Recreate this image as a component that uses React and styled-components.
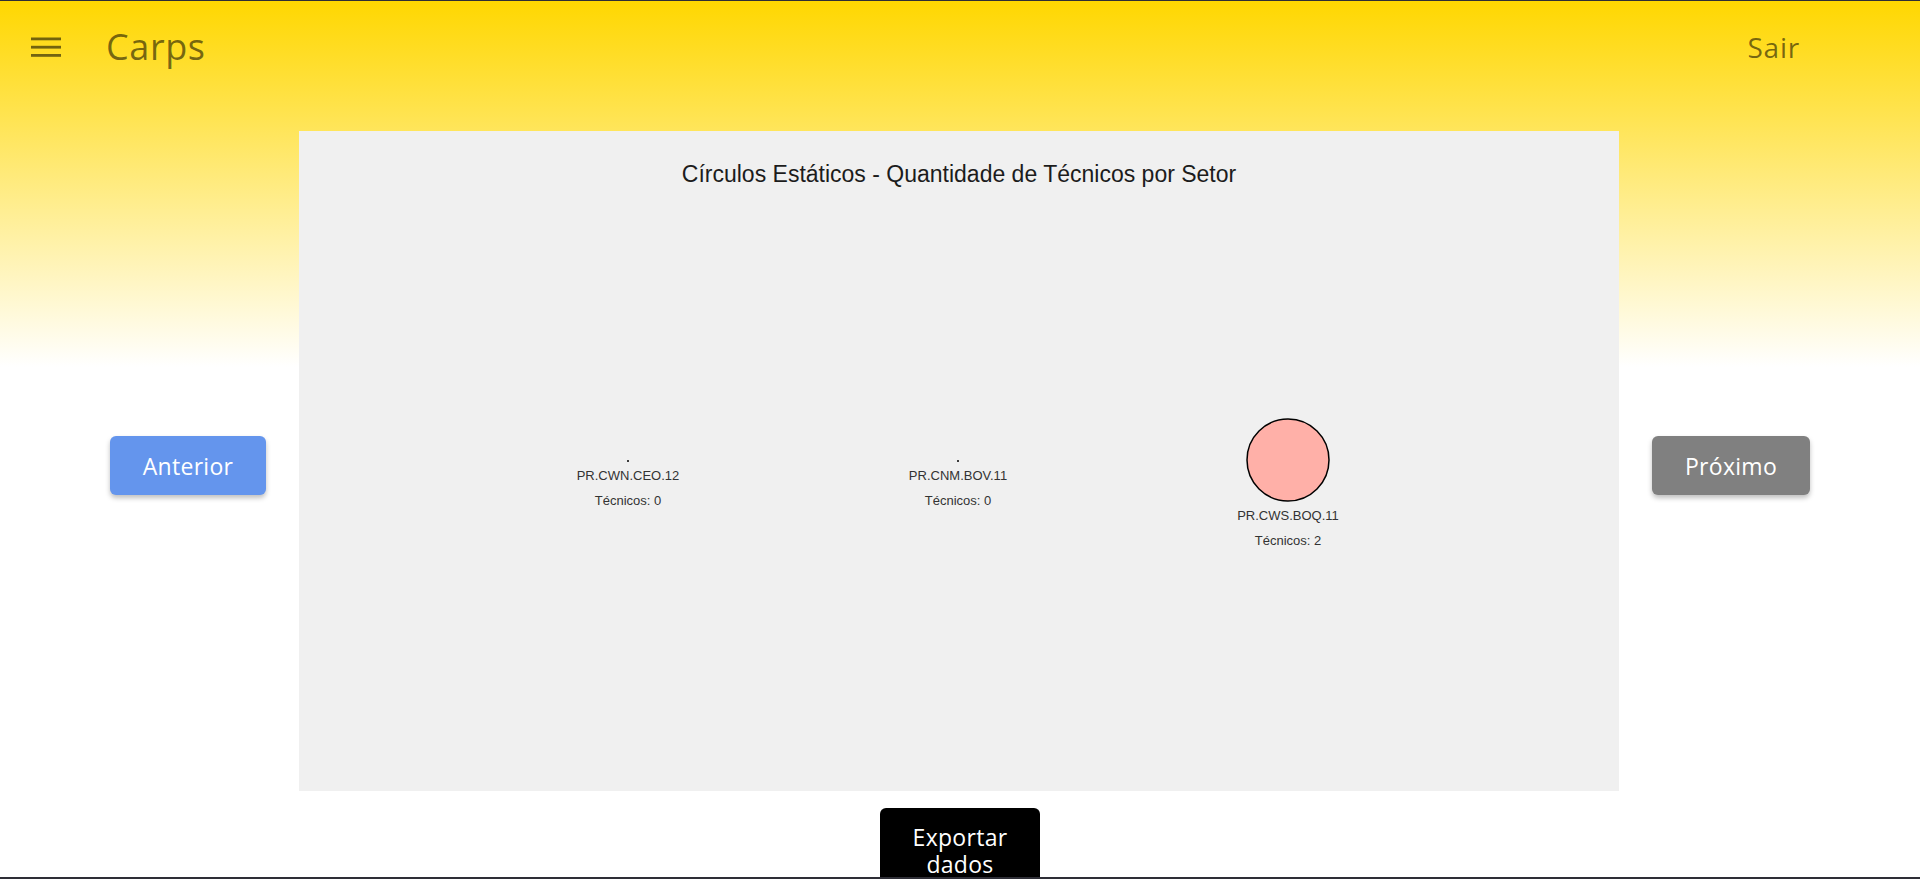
import React from "react";
import styled, { createGlobalStyle } from "styled-components";

const GlobalStyle = createGlobalStyle`
	html, body {
		margin: 0;
		padding: 0;
		overflow: hidden;
	}
	body {
		font-family: "Open Sans", "Liberation Sans", sans-serif;
		background: #fff;
	}
`;

const Page = styled.div`
	min-height: 100vh;
	background: linear-gradient(to bottom, #ffd700 0px, #ffffff 367px);
	display: flex;
	flex-direction: column;
	align-items: center;
`;

const Frame = styled.div`
	position: fixed;
	inset: 0;
	border-top: 1px solid #2e2e36;
	border-bottom: 2px solid #2e2e36;
	pointer-events: none;
`;

const Header = styled.header`
	align-self: stretch;
	height: 93px;
	display: flex;
	align-items: center;
	padding: 0 120px 0 31px;
	color: rgba(0, 0, 0, 0.55);
`;

const MenuButton = styled.button`
	border: none;
	background: none;
	padding: 0;
	margin: 0 45px 0 0;
	display: flex;
	cursor: pointer;
	color: inherit;
`;

const Brand = styled.h1`
	margin: 0;
	font-size: 36px;
	font-weight: 500;
	letter-spacing: 0.6px;
	flex: 1;
`;

const Logout = styled.button`
	border: none;
	background: none;
	padding: 0;
	font-family: inherit;
	font-size: 28px;
	font-weight: 500;
	letter-spacing: 0.8px;
	color: inherit;
	cursor: pointer;
`;

const Row = styled.main`
	margin-top: 38px;
	display: flex;
	align-items: center;
	gap: 33px;
`;

const NavButton = styled.button`
	width: ${(p) => p.$width}px;
	height: 59px;
	margin-top: 9px;
	border: none;
	border-radius: 6px;
	background: ${(p) => p.$bg};
	color: #fff;
	font-family: inherit;
	font-size: 23px;
	letter-spacing: 0.3px;
	box-shadow: 0 3px 5px rgba(0, 0, 0, 0.25);
	cursor: pointer;
`;

const Panel = styled.section`
	width: 1320px;
	height: 660px;
	background: #f0f0f0;
	display: flex;
	flex-direction: column;
`;

const ChartTitle = styled.h2`
	margin: 0;
	padding-top: 30px;
	height: 26px;
	text-align: center;
	font-family: "Liberation Sans", Arial, sans-serif;
	font-size: 23px;
	line-height: 26px;
	font-weight: 400;
	color: #1c1c1c;
`;

const Plot = styled.svg`
	display: block;
	flex: 1;
	width: 100%;
	font-family: "Liberation Sans", Arial, sans-serif;
`;

const ExportButton = styled.button`
	margin-top: 17px;
	width: 160px;
	padding: 16px 20px 12px;
	border: none;
	border-radius: 6px;
	background: #000;
	color: #fff;
	font-family: inherit;
	font-size: 23px;
	line-height: 27px;
	letter-spacing: 0.3px;
	cursor: pointer;
`;

const setores = [
	{ nome: "PR.CWN.CEO.12", tecnicos: 0 },
	{ nome: "PR.CNM.BOV.11", tecnicos: 0 },
	{ nome: "PR.CWS.BOQ.11", tecnicos: 2 },
];

function MenuIcon() {
	return (
		<svg width="30" height="20" viewBox="0 0 30 20" fill="currentColor">
			<rect x="0" y="0.5" width="30" height="2.8" />
			<rect x="0" y="8.8" width="30" height="2.8" />
			<rect x="0" y="17" width="30" height="2.8" />
		</svg>
	);
}

function CirclesChart() {
	// plot area starts 56px below the panel top (under the title)
	const cy = 273;
	return (
		<Plot viewBox="0 0 1320 604" preserveAspectRatio="xMidYMin meet">
			{setores.map((s, i) => {
				const cx = 330 * (i + 1) - 1;
				const r = s.tecnicos ? s.tecnicos * 20 + 1 : 0;
				const y = cy + (r ? 0 : 1);
				return (
					<g key={s.nome}>
						{r ? (
							<circle cx={cx} cy={y} r={r} fill="#ffb0a8" stroke="#000" strokeWidth="1.5" />
						) : (
							<circle cx={cx} cy={y} r="1" fill="#000" />
						)}
						<text x={cx} y={y + r + 19} textAnchor="middle" fontSize="13" fill="#333">
							{s.nome}
						</text>
						<text x={cx} y={y + r + 44} textAnchor="middle" fontSize="13" fill="#333">
							Técnicos: {s.tecnicos}
						</text>
					</g>
				);
			})}
		</Plot>
	);
}

export default function App() {
	return (
		<>
			<GlobalStyle />
			<Page>
				<Header>
					<MenuButton aria-label="menu">
						<MenuIcon />
					</MenuButton>
					<Brand>Carps</Brand>
					<Logout>Sair</Logout>
				</Header>
				<Row>
					<NavButton $bg="#6495ed" $width={156}>
						Anterior
					</NavButton>
					<Panel>
						<ChartTitle>Círculos Estáticos - Quantidade de Técnicos por Setor</ChartTitle>
						<CirclesChart />
					</Panel>
					<NavButton $bg="#808080" $width={158}>
						Próximo
					</NavButton>
				</Row>
				<ExportButton>Exportar dados</ExportButton>
			</Page>
			<Frame />
		</>
	);
}
